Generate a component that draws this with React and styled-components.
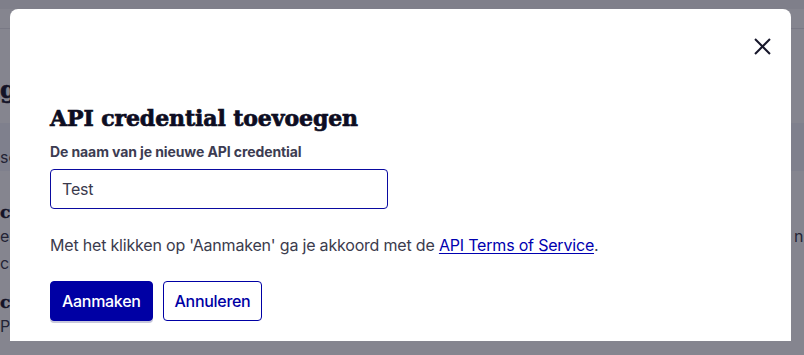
import React from "react";
import styled, { createGlobalStyle } from "styled-components";

const Global = createGlobalStyle`
  html, body { margin: 0; padding: 0; }
  body {
    width: 804px;
    height: 355px;
    overflow: hidden;
    font-family: Inter, "Noto Sans", sans-serif;
    background: #f4f4f7;
  }
  * { box-sizing: border-box; }
`;

/* ---------- page behind the dialog ---------- */
const Page = styled.div`
  width: 804px;
  height: 355px;
  display: flex;
  flex-direction: column;
  background: #ffffff;
  overflow: hidden;
`;

const TopStrip = styled.div`
  height: 9px;
  background: #f2f2f4;
`;

const NavBar = styled.div`
  height: 20px;
  background: #ffffff;
  border-bottom: 1px solid #e6e6ea;
`;

const Content = styled.div`
  display: flex;
  flex-direction: column;
  padding-top: 46px;
  white-space: nowrap;
  color: #1b1b2f;
`;

const PageHeading = styled.div`
  font-family: "DejaVu Serif", serif;
  font-weight: 700;
  font-size: 24px;
  line-height: 30px;
  -webkit-text-stroke: 0.6px currentColor;
`;

const Band = styled.div`
  margin-top: 18px;
  height: 48px;
  background: #f3f4fa;
  display: flex;
  align-items: flex-end;
  padding-bottom: 4px;
  font-size: 16px;
  color: #3b3b4b;
`;

const SubHeading = styled.div`
  font-family: "DejaVu Serif", serif;
  font-weight: 700;
  font-size: 17px;
  line-height: 22px;
  -webkit-text-stroke: 0.4px currentColor;
  margin-top: ${(p) => p.$mt}px;
`;

const TextRow = styled.div`
  width: 822px;
  display: flex;
  justify-content: space-between;
  font-size: 16px;
  line-height: 27px;
  color: #3b3b4b;
`;

const Overlay = styled.div`
  position: fixed;
  inset: 0;
  background: rgba(12, 12, 32, 0.5);
  display: flex;
  align-items: flex-start;
  padding: 9px 0 0 10px;
`;

/* ---------- dialog ---------- */
const Dialog = styled.div`
  position: relative;
  width: 781px;
  height: 332px;
  background: #ffffff;
  border-radius: 8px 8px 0 0;
  padding: 94px 40px 0 40px;
  display: flex;
  flex-direction: column;
`;

const CloseButton = styled.button`
  position: absolute;
  top: 22px;
  right: 14px;
  width: 30px;
  height: 30px;
  padding: 0;
  border: 0;
  background: transparent;
  display: flex;
  align-items: center;
  justify-content: center;
  color: #17172b;
  cursor: pointer;
`;

const Title = styled.h2`
  margin: 0;
  font-family: "DejaVu Serif", serif;
  font-weight: 700;
  font-size: 22px;
  line-height: 30px;
  color: #0d0d22;
  letter-spacing: -0.1px;
  -webkit-text-stroke: 0.7px currentColor;
`;

const Label = styled.label`
  margin-top: 9px;
  font-size: 14px;
  font-weight: 700;
  line-height: 20px;
  letter-spacing: -0.1px;
  color: #3c3c52;
`;

const Input = styled.input`
  margin-top: 7px;
  width: 338px;
  height: 40px;
  border: 1px solid #0a0aa0;
  border-radius: 4px;
  padding: 0 11px;
  font-family: Inter, "Noto Sans", sans-serif;
  font-size: 16px;
  letter-spacing: -0.2px;
  color: #3a3a4c;
  outline: none;
`;

const Notice = styled.p`
  margin: 24px 0 0 0;
  font-size: 16px;
  line-height: 24px;
  letter-spacing: -0.19px;
  color: #3b3b4d;
`;

const Link = styled.a`
  color: #0000b0;
  text-decoration: underline;
  text-underline-offset: 2px;
`;

const Actions = styled.div`
  margin-top: 24px;
  display: flex;
  gap: 10px;
`;

const Button = styled.button`
  height: 40px;
  padding: 0 11px;
  border-radius: 4px;
  font-family: Inter, "Noto Sans", sans-serif;
  font-size: 16px;
  font-weight: 500;
  letter-spacing: -0.3px;
  cursor: pointer;
  border: 1px solid #0000a4;
  background: ${(p) => (p.$primary ? "#0000a4" : "#ffffff")};
  color: ${(p) => (p.$primary ? "#ffffff" : "#0000a4")};
  box-shadow: ${(p) => (p.$primary ? "0 2px 0 #c8c8dc" : "none")};
`;

function CloseIcon() {
  return (
    <svg width="27" height="27" viewBox="0 0 24 24" fill="none" stroke="currentColor" strokeWidth="1.8" strokeLinecap="square">
      <path d="M18 6 6 18" />
      <path d="m6 6 12 12" />
    </svg>
  );
}

export default function App() {
  return (
    <>
      <Global />
      <Page>
        <TopStrip />
        <NavBar />
        <Content>
          <PageHeading>gegevens</PageHeading>
          <Band>seinen</Band>
          <SubHeading $mt={30}>ciale gegevens</SubHeading>
          <TextRow>
            <span>en die je</span>
            <span>niet</span>
          </TextRow>
          <TextRow>
            <span>c</span>
          </TextRow>
          <SubHeading $mt={14}>ciale</SubHeading>
          <TextRow>
            <span>P|</span>
          </TextRow>
        </Content>
      </Page>
      <Overlay>
        <Dialog role="dialog" aria-modal="true">
          <CloseButton aria-label="Sluiten">
            <CloseIcon />
          </CloseButton>
          <Title>API credential toevoegen</Title>
          <Label htmlFor="cred-name">De naam van je nieuwe API credential</Label>
          <Input id="cred-name" defaultValue="Test" />
          <Notice>
            Met het klikken op 'Aanmaken' ga je akkoord met de{" "}
            <Link href="#">API Terms of Service</Link>.
          </Notice>
          <Actions>
            <Button $primary>Aanmaken</Button>
            <Button>Annuleren</Button>
          </Actions>
        </Dialog>
      </Overlay>
    </>
  );
}
